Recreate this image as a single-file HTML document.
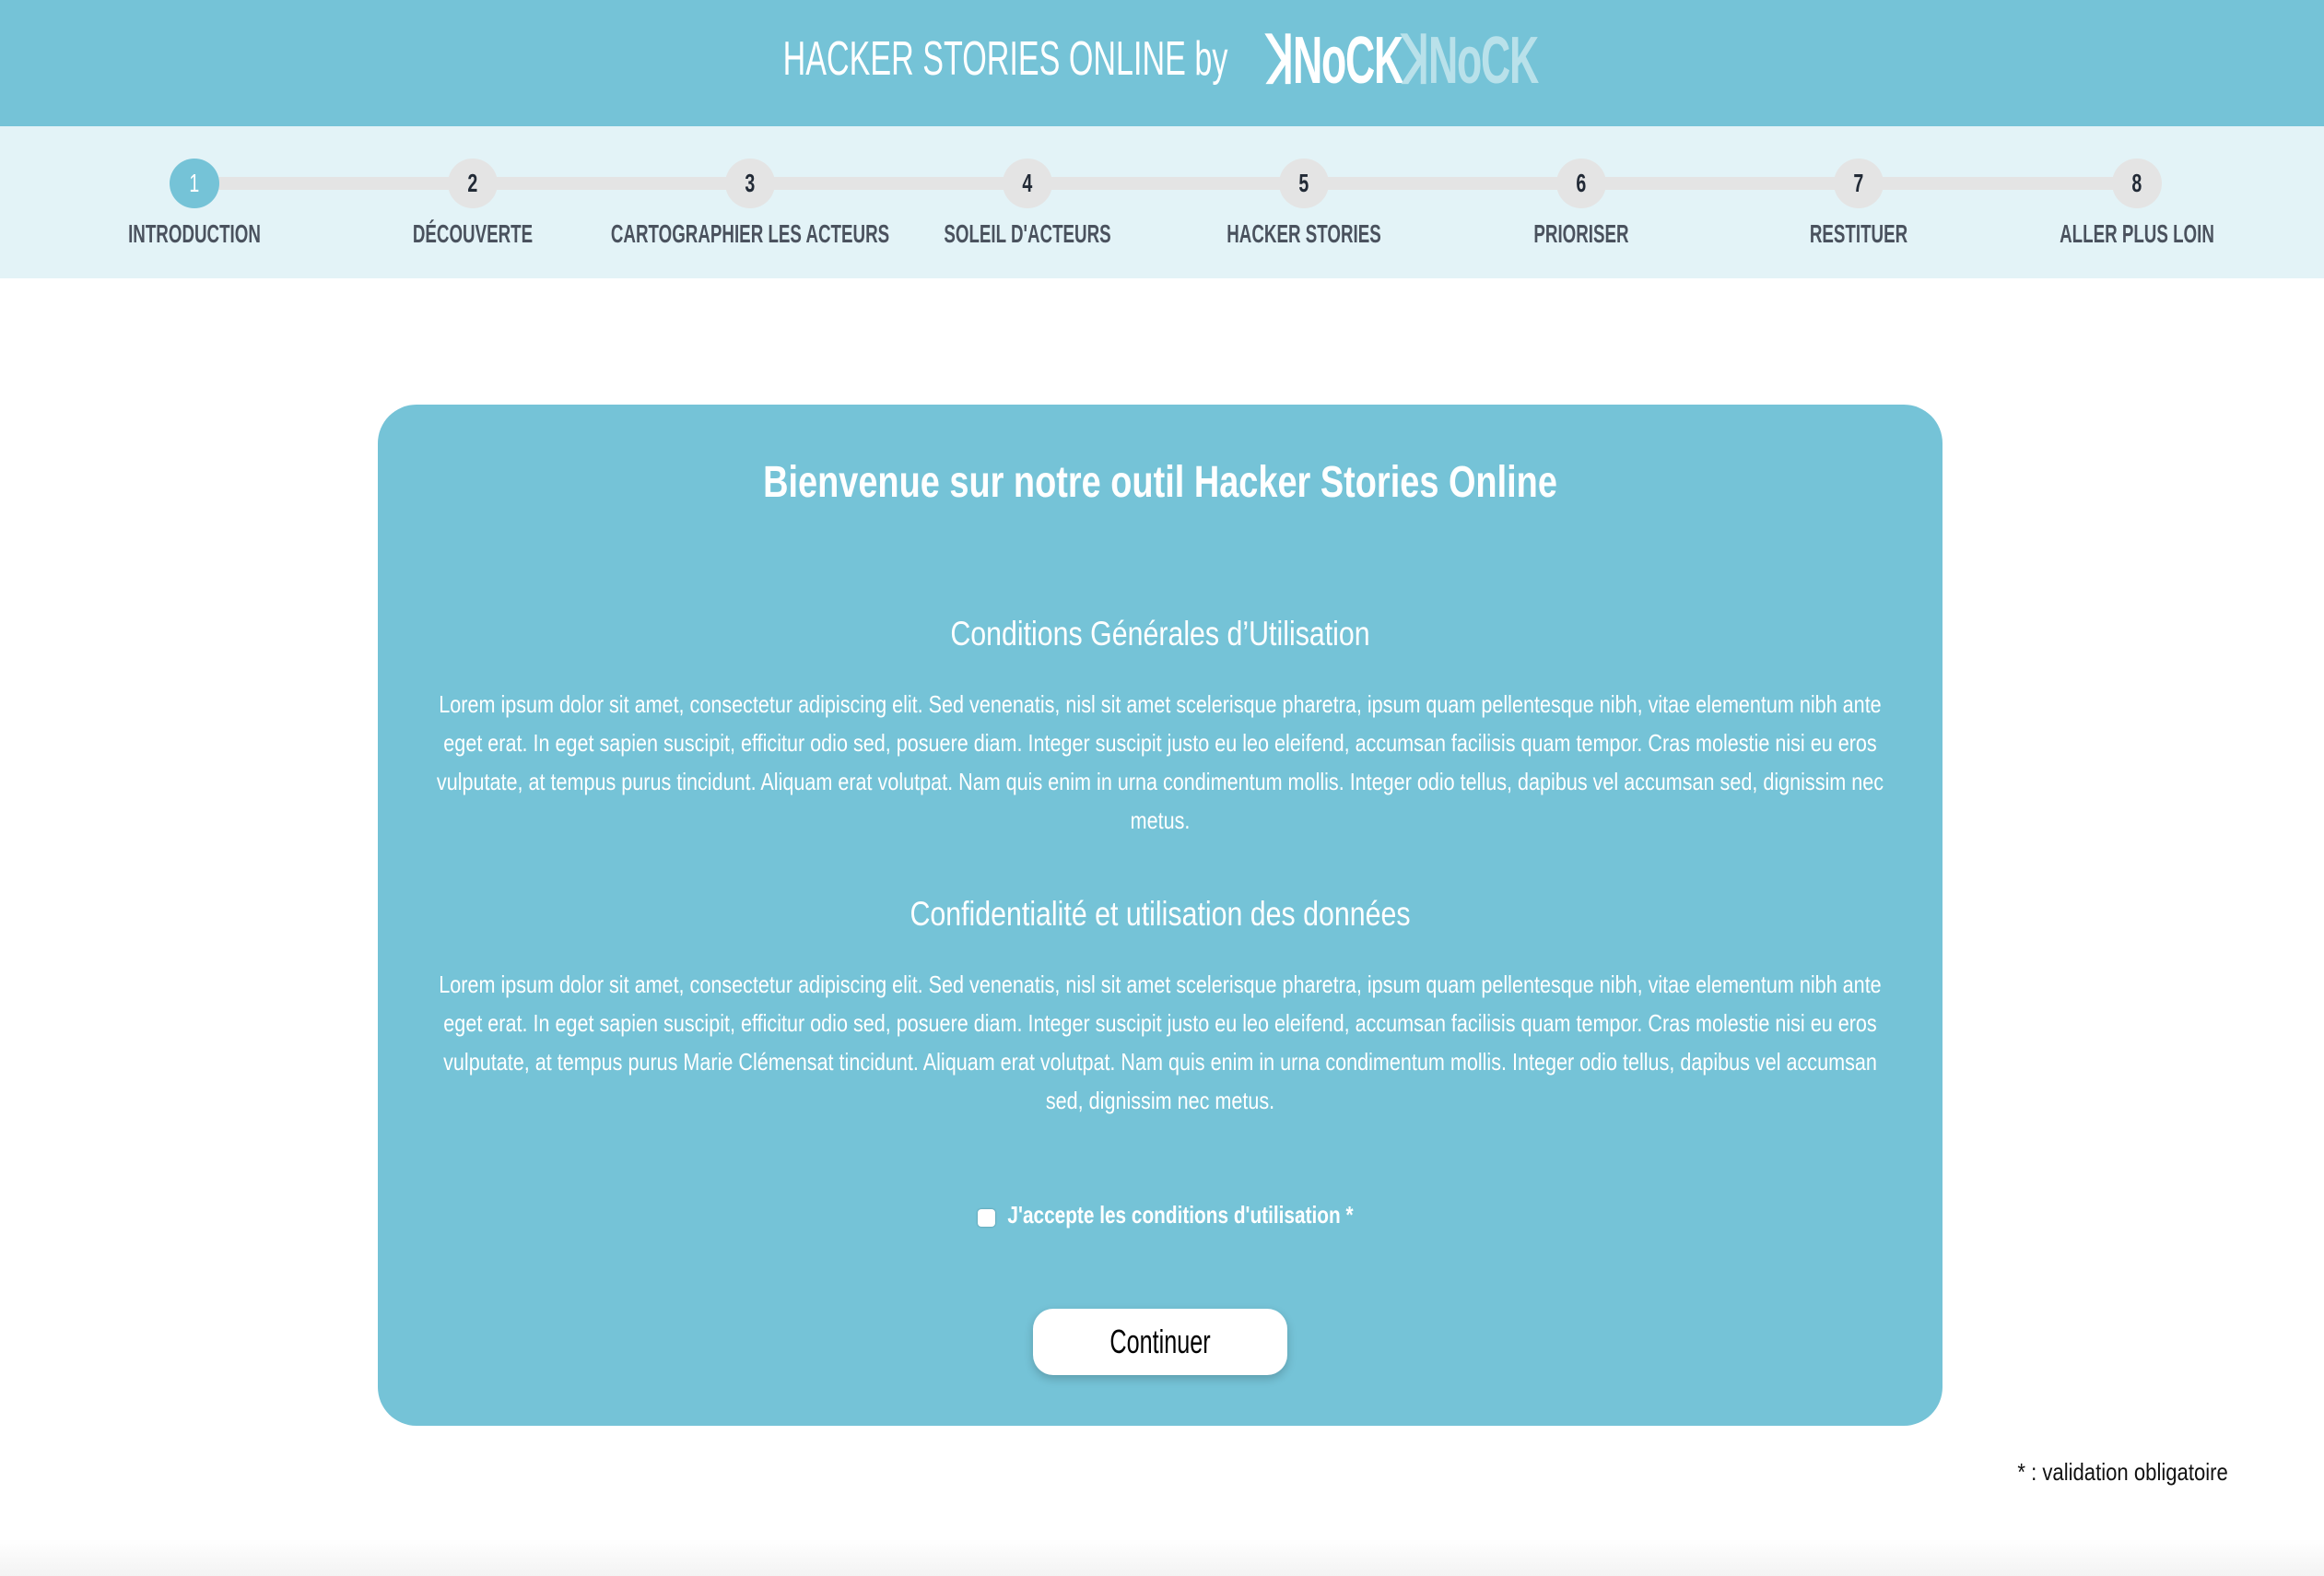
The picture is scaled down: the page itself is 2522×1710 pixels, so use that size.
<!DOCTYPE html>
<html><head><meta charset="utf-8">
<style>
*{margin:0;padding:0;box-sizing:border-box}
html,body{width:2522px;height:1710px;overflow:hidden;background:#fff;font-family:"Liberation Sans",sans-serif}
.abs{position:absolute}
.ln{position:absolute;left:0;right:0;white-space:nowrap}
.ln span,.cs{position:absolute;left:50%;white-space:nowrap;transform:translateX(-50%) scaleX(var(--s))}
#hdr{position:absolute;left:0;top:0;width:2522px;height:137px;background:#75c3d7}
#steps{position:absolute;left:0;top:137px;width:2522px;height:165px;background:#e3f3f7}
.bar{position:absolute;left:211px;width:2108px;top:55px;height:14px;background:#e4e4e4}
.c{position:absolute;width:54px;height:54px;border-radius:50%;background:#e4e4e4;top:35px;text-align:center;line-height:54px;font-weight:bold;font-size:28px;color:#222a36}
.c span{display:inline-block;transform:scaleX(.7)}
.lab{position:absolute;width:400px;top:100px;height:34px;font-weight:bold;font-size:28px;color:#4a525e;line-height:34px;--s:.67}
#card{position:absolute;left:410px;top:439px;width:1698px;height:1108px;background:#75c3d7;border-radius:42px;color:#fff}
.p{font-size:26px;line-height:42px;height:42px;--s:.83}
</style></head><body>
<div id="hdr">
  <div class="abs" style="left:791px;top:34px;width:600px;height:60px;color:#fff;font-size:52px;line-height:60px"><span class="cs" style="--s:.656">HACKER STORIES ONLINE by</span></div>
  <div class="abs" style="left:1342px;top:28px;width:360px;height:76px;font-size:72px;font-weight:bold;line-height:76px;letter-spacing:-2px"><span class="cs" style="--s:.62"><span style="color:#fff">ꓘNoCK</span><span style="color:#b9e1ea">ꓘNoCK</span></span></div>
</div>
<div id="steps">
  <div class="bar"></div>
  <div class="c" style="left:184px;background:#75c3d7;color:#fff;font-weight:normal"><span>1</span></div>
  <div class="c" style="left:486px"><span>2</span></div>
  <div class="c" style="left:787px"><span>3</span></div>
  <div class="c" style="left:1088px"><span>4</span></div>
  <div class="c" style="left:1388px"><span>5</span></div>
  <div class="c" style="left:1689px"><span>6</span></div>
  <div class="c" style="left:1990px"><span>7</span></div>
  <div class="c" style="left:2292px"><span>8</span></div>
  <div class="lab" style="left:11px"><span class="cs">INTRODUCTION</span></div>
  <div class="lab" style="left:313px"><span class="cs">DÉCOUVERTE</span></div>
  <div class="lab" style="left:614px"><span class="cs">CARTOGRAPHIER LES ACTEURS</span></div>
  <div class="lab" style="left:915px"><span class="cs">SOLEIL D'ACTEURS</span></div>
  <div class="lab" style="left:1215px"><span class="cs">HACKER STORIES</span></div>
  <div class="lab" style="left:1516px"><span class="cs">PRIORISER</span></div>
  <div class="lab" style="left:1817px"><span class="cs">RESTITUER</span></div>
  <div class="lab" style="left:2119px"><span class="cs">ALLER PLUS LOIN</span></div>
</div>
<div id="card">
  <div class="ln" style="top:56px;font-size:48px;font-weight:bold;line-height:58px"><span style="--s:.79">Bienvenue sur notre outil Hacker Stories Online</span></div>
  <div class="ln" style="top:226px;font-size:37px;line-height:46px"><span style="--s:.82">Conditions Générales d’Utilisation</span></div>
  <div class="ln p" style="top:304px"><span>Lorem ipsum dolor sit amet, consectetur adipiscing elit. Sed venenatis, nisl sit amet scelerisque pharetra, ipsum quam pellentesque nibh, vitae elementum nibh ante</span></div>
  <div class="ln p" style="top:346px"><span>eget erat. In eget sapien suscipit, efficitur odio sed, posuere diam. Integer suscipit justo eu leo eleifend, accumsan facilisis quam tempor. Cras molestie nisi eu eros</span></div>
  <div class="ln p" style="top:388px"><span>vulputate, at tempus purus tincidunt. Aliquam erat volutpat. Nam quis enim in urna condimentum mollis. Integer odio tellus, dapibus vel accumsan sed, dignissim nec</span></div>
  <div class="ln p" style="top:430px"><span>metus.</span></div>
  <div class="ln" style="top:530px;font-size:37px;line-height:46px"><span style="--s:.82">Confidentialité et utilisation des données</span></div>
  <div class="ln p" style="top:608px"><span>Lorem ipsum dolor sit amet, consectetur adipiscing elit. Sed venenatis, nisl sit amet scelerisque pharetra, ipsum quam pellentesque nibh, vitae elementum nibh ante</span></div>
  <div class="ln p" style="top:650px"><span>eget erat. In eget sapien suscipit, efficitur odio sed, posuere diam. Integer suscipit justo eu leo eleifend, accumsan facilisis quam tempor. Cras molestie nisi eu eros</span></div>
  <div class="ln p" style="top:692px"><span>vulputate, at tempus purus Marie Clémensat tincidunt. Aliquam erat volutpat. Nam quis enim in urna condimentum mollis. Integer odio tellus, dapibus vel accumsan</span></div>
  <div class="ln p" style="top:734px"><span>sed, dignissim nec metus.</span></div>
  <div class="abs" style="left:651px;top:873px;width:19px;height:19px;background:#fff;border-radius:4px;box-shadow:0 0 2px rgba(0,0,0,.3)"></div>
  <div class="abs" style="left:641px;top:862px;width:460px;height:34px;font-size:26px;font-weight:bold;line-height:34px"><span class="cs" style="--s:.8">J'accepte les conditions d'utilisation *</span></div>
  <div class="abs" style="left:711px;top:981px;width:276px;height:72px;background:#fff;border-radius:22px;box-shadow:0 4px 10px rgba(0,0,0,.2);text-align:center;line-height:72px;color:#000;font-size:36px;white-space:nowrap"><span style="display:inline-block;transform:scaleX(.7)">Continuer</span></div>
</div>
<div class="abs" style="left:2110px;top:1580px;width:308px;text-align:right;white-space:nowrap;font-size:26px;line-height:34px;color:#111"><span style="display:inline-block;transform:scaleX(.85);transform-origin:right center">* : validation obligatoire</span></div>
<div class="abs" style="left:0;top:1670px;width:2522px;height:40px;background:linear-gradient(#fff,#f3f3f3)"></div>
</body></html>
